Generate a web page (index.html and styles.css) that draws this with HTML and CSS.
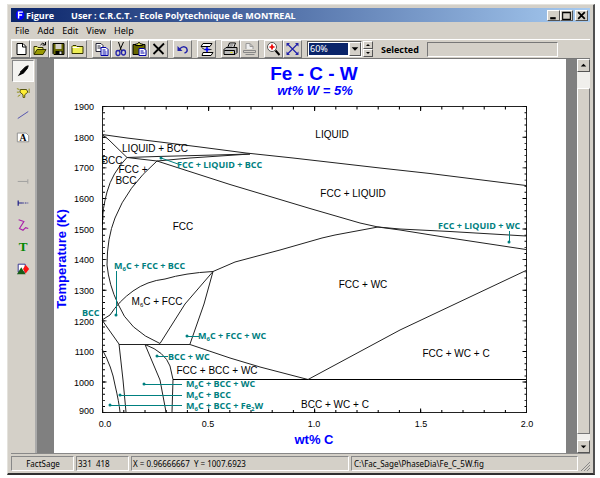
FILE: index.html
```html
<!DOCTYPE html>
<html lang="en">
<head>
<meta charset="utf-8">
<title>Figure</title>
<link rel="stylesheet" href="styles.css">
</head>
<body>
<div class="window">
  <header class="titlebar">
    <svg class="logo" viewBox="0 0 14 14"><ellipse cx="7" cy="7" rx="6" ry="7" fill="#00f"/><path d="M5 12V3h6M5 7h5" fill="none" stroke="#fff" stroke-width="2"/></svg>
    <span class="app">Figure</span>
    <span class="user">User : C.R.C.T. - Ecole Polytechnique de MONTREAL</span>
    <div class="winbtns">
      <button class="winbtn" aria-label="Minimize"><svg viewBox="0 0 10 8"><path d="M2 6.500h5" stroke="#000" stroke-width="2"/></svg></button>
      <button class="winbtn" aria-label="Maximize"><svg viewBox="0 0 10 8"><path d="M1.500 1.500h7v6h-7zM1 1h8" fill="none" stroke="#000"/></svg></button>
      <button class="winbtn close" aria-label="Close"><svg viewBox="0 0 10 8"><path d="M2 1l6 6M8 1L2 7" stroke="#000" stroke-width="1.600"/></svg></button>
    </div>
  </header>
  <nav class="menu">
    <button>File</button><button>Add</button><button>Edit</button><button>View</button><button>Help</button>
  </nav>
  <div class="toolbar">
    <div class="group">
      <button class="tool" aria-label="New"><svg viewBox="0 0 16 16"><path d="M4.500 2.500h6l3 3v8h-9z" fill="#fff" stroke="#000"/><path d="M10 2.500v3.500h3.500" fill="none" stroke="#000"/></svg></button>
      <button class="tool" aria-label="Open"><svg viewBox="0 0 16 16"><path d="M2.500 13V5.500h3l1 1h5V9" fill="#ee6" stroke="#330"/><path d="M2.500 13.500l3-5h9l-3 5z" fill="#990" stroke="#330"/><path d="M9 4q2-3 4-1l1 1m0-3v3h-3" fill="none" stroke="#000"/></svg></button>
      <button class="tool" aria-label="Save"><svg viewBox="0 0 16 16"><path d="M2.500 2.500h11v11h-10l-1-1z" fill="#660" stroke="#000"/><path d="M5 3h6v5H5z" fill="#d4d0c8"/><path d="M5 10h7v3H5z" fill="#000"/><path d="M9 10.500h2V13H9z" fill="#ddd"/></svg></button>
      <button class="tool" aria-label="Close folder"><svg viewBox="0 0 16 16"><path d="M2.500 12.500v-7l1-1h3l1 1h6v7z" fill="#ee5" stroke="#330"/><path d="M3 6.500h7" stroke="#fff"/></svg></button>
    </div>
    <div class="group">
      <button class="tool" aria-label="Copy"><svg viewBox="0 0 16 16"><path d="M2.500 2.500h5l2 2v6h-7z" fill="#fff" stroke="#223"/><path d="M4 5h3M4 7h4" stroke="#223"/><path d="M7.500 6.500h5l2 2v6h-7z" fill="#fff" stroke="#00a"/><path d="M9 9h3M9 11h4M9 13h4" stroke="#00a"/></svg></button>
      <button class="tool" aria-label="Cut"><svg viewBox="0 0 16 16"><path d="M6 1l3 9M11 1L7 10" stroke="#000" fill="none"/><ellipse cx="5.500" cy="12" rx="2" ry="2.500" fill="none" stroke="#22a" stroke-width="1.300"/><ellipse cx="11" cy="11.500" rx="2" ry="2.500" fill="none" stroke="#22a" stroke-width="1.300"/></svg></button>
      <button class="tool" aria-label="Paste"><svg viewBox="0 0 16 16"><path d="M1.500 3.500h12v10h-12z" fill="#660" stroke="#000"/><path d="M4 4.500V3h2l1-1.500h1L9 3h2v1.500z" fill="#ee5" stroke="#000"/><path d="M7.500 7.500h5l2 2v5h-7z" fill="#fff" stroke="#00a"/><path d="M9 10h3M9 12h4" stroke="#00a"/></svg></button>
      <button class="tool" aria-label="Delete"><svg viewBox="0 0 16 16"><path d="M3 3l10 10M13.500 2.500L3 13" stroke="#000" stroke-width="1.800"/></svg></button>
    </div>
    <div class="group">
      <button class="tool" aria-label="Undo"><svg viewBox="0 0 16 16"><path d="M5 8q4-4 7-1 2 4-2 5" fill="none" stroke="#22a" stroke-width="1.500"/><path d="M3 5v5h5z" fill="#22a"/></svg></button>
    </div>
    <div class="group">
      <button class="tool" aria-label="Refresh"><svg viewBox="0 0 16 16"><path d="M4.500 2.500h9l-2 3h-9zM4.500 11.500h10l-2 3h-9z" fill="#fff" stroke="#000"/><path d="M3 6.500l3 2h7" stroke="#333" fill="none"/><path d="M8.500 6v5M6 8.500h5" stroke="#00f" stroke-width="1.500"/></svg></button>
    </div>
    <div class="group">
      <button class="tool" aria-label="Print"><svg viewBox="0 0 16 16"><path d="M5 7l2-5h6l-2 5" fill="#fff" stroke="#000"/><path d="M7 4h4M6 6h4" stroke="#444"/><path d="M1.500 8.500l2-2h11v5l-2 2h-11z" fill="#bbb" stroke="#000"/><path d="M2 9.500h10v4" stroke="#000" fill="none"/><path d="M8 11.500h2" stroke="#dd0"/></svg></button>
      <button class="tool" aria-label="Print setup"><svg viewBox="0 0 16 16"><path d="M4.500 8V2.500h4l3 3V8M8.500 2.500v3h3" fill="#eee" stroke="#999"/><path d="M2 9.500h12v2H2zM4 13.500h9" fill="none" stroke="#888"/></svg></button>
    </div>
    <div class="group">
      <button class="tool" aria-label="Zoom in"><svg viewBox="0 0 16 16"><circle cx="6.500" cy="6" r="4.500" fill="#fff" stroke="#555"/><path d="M4 6h5M6.500 3.500v5" stroke="#e00" stroke-width="1.700"/><path d="M10 9.500l4 4.500" stroke="#000" stroke-width="2"/></svg></button>
      <button class="tool" aria-label="Fit"><svg viewBox="0 0 16 16"><path d="M3 3l10 10M13 3L3 13" stroke="#22a" stroke-width="1.200"/><path d="M2 2h3.500L2 5.500zM14 2v3.500L10.500 2zM2 14v-3.500L5.500 14zM14 14h-3.500l3.500-3.500z" fill="#22a"/></svg></button>
    </div>
    <div class="zoom">
      <select aria-label="Zoom"><option>60%</option></select>
      <svg class="droparrow" viewBox="0 0 12 14"><path d="M2 5h8L6 9z"/></svg>
    </div>
    <div class="spinner">
      <button aria-label="Increase"><svg viewBox="0 0 8 6"><path d="M2 4h4L4 2z"/></svg></button>
      <button aria-label="Decrease"><svg viewBox="0 0 8 6"><path d="M2 2h4L4 4z"/></svg></button>
    </div>
    <label class="sel-label" for="selected">Selected</label>
    <input id="selected" class="selected" type="text" readonly>
  </div>
  <main class="body">
    <aside class="palette">
      <button class="pal active" aria-label="Pen"><svg viewBox="0 0 16 16"><path d="M2 14l3-5 3 2z" fill="#000"/><path d="M5 9l6-6 3-1-1 3-5 6z" fill="#000" stroke="#000"/></svg></button>
      <button class="pal" aria-label="Light"><svg viewBox="0 0 16 16"><path d="M5 4h7l1.500 3L10 10v3H8v-3L4.500 7z" fill="#fe3" stroke="#440"/><path d="M1 3l3 1M1 7h3M2 12l3-2M15 3v5" stroke="#880"/></svg></button>
      <button class="pal" aria-label="Line"><svg viewBox="0 0 16 16"><path d="M2 12L14 4" stroke="#44a"/></svg></button>
      <button class="pal" aria-label="Label"><svg viewBox="0 0 16 16"><path d="M1.500 3.500h10l3 3v7h-13z" fill="#fff" stroke="#888"/><text x="4" y="12" class="icon-a">A</text></svg></button>
      <span class="pal"></span>
      <button class="pal" aria-label="Tick"><svg viewBox="0 0 16 16"><path d="M2 8.500h11M13.500 6v5" stroke="#999"/></svg></button>
      <button class="pal" aria-label="Axis"><svg viewBox="0 0 16 16"><path d="M2.500 5v6M3 8h4" stroke="#228" stroke-width="1.400"/><path d="M7 8h7" stroke="#228" stroke-dasharray="2 1"/></svg></button>
      <button class="pal" aria-label="Curve"><svg viewBox="0 0 16 16"><path d="M3 2l6 2-5 8 4 2 3-3 3 1" fill="none" stroke="#a2a" stroke-width="1.300"/></svg></button>
      <button class="pal" aria-label="Text"><svg viewBox="0 0 16 16"><text x="3" y="13" class="icon-t">T</text></svg></button>
      <button class="pal" aria-label="Shapes"><svg viewBox="0 0 16 16"><path d="M2.500 2.500h8v9h-8z" fill="#fff" stroke="#228"/><path d="M11 3l4 5-4 5-3-5z" fill="#f11"/><path d="M1 14l5-8 5 8z" fill="#175c17"/></svg></button>
    </aside>
    <div class="canvas">
      <svg class="chart" viewBox="54 59 512 394" role="img" aria-label="Fe - C - W phase diagram">
        <g class="heading">
          <text class="h1" x="314" y="80">Fe - C - W</text>
          <text class="h2" x="315" y="95">wt% W = 5%</text>
        </g>
        <rect class="line" x="102.500" y="106.500" width="424" height="306"/>
        <g class="ticks">
          <path class="minor" pathLength="2000" d="M102.500 108H526.500"/>
          <path class="minor" pathLength="2000" d="M102.500 411.500H526.500"/>
          <path class="major-x" pathLength="2000" d="M102.500 109H526.500"/>
          <path class="major-x" pathLength="2000" d="M102.500 410.500H526.500"/>
          <path class="minor-y" pathLength="1000" d="M104 106.500V412.500"/>
          <path class="minor-y" pathLength="1000" d="M525.500 106.500V412.500"/>
          <path class="major-y" pathLength="1000" d="M104.500 106.500V412.500"/>
          <path class="major-y" pathLength="1000" d="M524.500 106.500V412.500"/>
        </g>
        <g class="line">
          <path d="M102 134.500L127 138 160 142 200 147 246 153 293 158 380 168 430 173.500 526 185.500"/>
          <path d="M102 134.500L108 139 127 157.500 157 156.500 215 155 250 154"/>
          <path d="M127 157.500L157 161 190 158 250 154"/>
          <path d="M127 157.500Q112 173 107 192T103 220"/>
          <path d="M157 161Q127 187 115 218 107 238 107 265 109 285 118 304 128 330 160 343.500"/>
          <path d="M157 161L230 184.500 310 208.500 360 223 378 227 400 229 450 231.500 526 236"/>
          <path d="M378 227L400 230 450 238 526 249.500"/>
          <path d="M102 320L110 315Q119 301 133 291T165 279Q185 273 213 271.500L235 262 280 250 322 238 335 235 378 227"/>
          <path d="M213 271.500L185 304 160 343.500M213 271.500L204 304 190 344"/>
          <path d="M119 344.500H190L230 358 260 367 308 379.500"/>
          <path d="M102 320L119 344 123 380 126 412"/>
          <path d="M102 349Q112 367 115 385 119 402 120 412"/>
          <path d="M145 344.500L160 380 166 412"/>
          <path d="M145 344.500Q165 352 170 366L173 379.500 172 412"/>
          <path class="strong" d="M173 379.500H526"/>
          <path d="M308 379.500L400 330 526 270.500"/>
        </g>
        <path class="strong" d="M102.500 210V225M102.500 308V334"/>
        <g class="axis">
          <text x="94" y="110">1900</text><text x="94" y="141">1800</text><text x="94" y="171">1700</text>
          <text x="94" y="202">1600</text><text x="94" y="233">1500</text><text x="94" y="263">1400</text>
          <text x="94" y="294">1300</text><text x="94" y="325">1200</text><text x="94" y="355">1100</text>
          <text x="94" y="386">1000</text><text x="94" y="414">900</text>
        </g>
        <g class="axis mid">
          <text x="105" y="427">0.0</text><text x="208" y="427">0.5</text><text x="314" y="427">1.0</text>
          <text x="421" y="427">1.5</text><text x="527" y="427">2.0</text>
        </g>
        <text class="axis-title" x="314" y="444">wt% C</text>
        <text class="axis-title" transform="rotate(-90 66 259)" x="66" y="259">Temperature (K)</text>
        <g class="phase">
          <text x="332" y="138">LIQUID</text>
          <text x="155" y="152">LIQUID + BCC</text>
          <text x="112" y="164">BCC</text>
          <text x="133" y="173">FCC +</text>
          <text x="126" y="184">BCC</text>
          <text x="353" y="197">FCC + LIQUID</text>
          <text x="183" y="230">FCC</text>
          <text x="363" y="288">FCC + WC</text>
          <text x="157" y="305">M<tspan class="sub" dy="2">6</tspan><tspan dy="-2">C + FCC</tspan></text>
          <text x="456" y="357">FCC + WC + C</text>
          <text x="217" y="374">FCC + BCC + WC</text>
          <text x="335" y="408">BCC + WC + C</text>
        </g>
        <g class="leader">
          <path d="M161 158L178 164M116.500 271V314M187 336.500H199M156 356.500H168M144 384.500H182M120 395.500H182M110 405.500H182M509.500 231V242"/>
          <g class="dot">
            <circle cx="161" cy="158" r="1.500"/><circle cx="116" cy="315" r="1.500"/><circle cx="187" cy="336" r="1.500"/><circle cx="157" cy="356" r="1.500"/><circle cx="144" cy="384" r="1.500"/><circle cx="120" cy="395" r="1.500"/><circle cx="110" cy="405" r="1.500"/><circle cx="509" cy="242" r="1.500"/>
          </g>
        </g>
        <g class="note">
          <text x="177" y="168">FCC + LIQUID + BCC</text>
          <text x="438" y="229">FCC + LIQUID + WC</text>
          <text x="114" y="269">M<tspan class="sub" dy="2">6</tspan><tspan dy="-2">C + FCC + BCC</tspan></text>
          <text x="82" y="316">BCC</text>
          <text x="198" y="339">M<tspan class="sub" dy="2">6</tspan><tspan dy="-2">C + FCC + WC</tspan></text>
          <text x="168" y="360">BCC + WC</text>
          <text x="186" y="387">M<tspan class="sub" dy="2">6</tspan><tspan dy="-2">C + BCC + WC</tspan></text>
          <text x="186" y="398">M<tspan class="sub" dy="2">6</tspan><tspan dy="-2">C + BCC</tspan></text>
          <text x="186" y="409">M<tspan class="sub" dy="2">6</tspan><tspan dy="-2">C + BCC + Fe</tspan><tspan class="sub" dy="2">2</tspan><tspan dy="-2">W</tspan></text>
        </g>
      </svg>
    </div>
    <div class="scroll">
      <button aria-label="Scroll up"><svg viewBox="0 0 12 12"><path d="M3 7h6L6 4z"/></svg></button>
      <div class="track"><div class="thumb"></div></div>
      <button aria-label="Scroll down"><svg viewBox="0 0 12 12"><path d="M3 5h6L6 8z"/></svg></button>
    </div>
  </main>
  <footer class="status">
    <span class="cell name">FactSage</span>
    <span class="cell pos">331&nbsp; 418</span>
    <span class="cell coords">X = 0.96666667&nbsp; Y = 1007.6923</span>
    <span class="cell path">C:\Fac_Sage\PhaseDia\Fe_C_5W.fig</span>
    <svg class="grip" viewBox="0 0 10 10"><path d="M1 10l9-9M4 10l6-6M7 10l3-3" stroke="#888"/></svg>
  </footer>
</div>
</body>
</html>
```
FILE: styles.css
```css
* { box-sizing: border-box; }
body {
  margin: 0;
  padding: 4px 5px 4px 7px;
  background: #fff;
  font-family: "Noto Sans", sans-serif;
  font-size: 9px;
  color: #000;
}
button { font: inherit; color: inherit; padding: 0; border: 0; background: none; }
svg { display: block; }
.window {
  display: flex;
  flex-direction: column;
  background: #d4d0c8;
  border: 1px solid #e4e2dc;
  border-right: 2px solid #505050;
  border-bottom: 2px solid #303030;
  padding: 3px 3px 2px;
}
.titlebar {
  display: flex;
  align-items: center;
  height: 14px;
  padding: 0 2px 0 4px;
  background: linear-gradient(90deg, #0a246a, #a6caf0);
  color: #fff;
  font-family: "Open Sans", sans-serif;
  font-weight: 700;
  white-space: nowrap;
}
.logo { width: 10px; height: 12px; margin-right: 1px; }
.user { margin-left: 17px; }
.winbtns { display: flex; margin-left: auto; }
.winbtn, .scroll button, .spinner button {
  background: #d4d0c8;
  border: 1px solid;
  border-color: #fff #555 #555 #fff;
}
.winbtn { width: 13px; height: 11px; }
.winbtn.close { margin-left: 2px; }
.winbtn svg { width: 100%; height: 100%; }
.menu { display: flex; gap: 8px; height: 17px; padding: 0 4px; align-items: center; }
.toolbar {
  display: flex;
  align-items: center;
  height: 20px;
  border-top: 1px solid #fff;
  border-bottom: 1px solid #777;
}
.group { display: flex; margin-right: 5px; }
.tool {
  width: 19px;
  height: 18px;
  border: 1px solid;
  border-color: #fff #777 #777 #fff;
}
.tool svg { width: 100%; height: 100%; }
.zoom {
  display: grid;
  width: 55px;
  height: 16px;
  border: 1px solid;
  border-color: #555 #fff #fff #555;
  background: #fff;
}
.zoom > * { grid-area: 1 / 1; }
.zoom select {
  appearance: none;
  margin: 1px 13px 1px 1px;
  border: 0;
  border-radius: 0;
  padding: 0 1px;
  background: #0a246a;
  color: #fff;
  font: inherit;
  line-height: 12px;
}
.droparrow {
  justify-self: end;
  width: 12px;
  height: 14px;
  background: #d4d0c8;
  border: 1px solid;
  border-color: #fff #555 #555 #fff;
  pointer-events: none;
}
.spinner { display: flex; flex-direction: column; width: 10px; margin: 0 8px 0 1px; }
.spinner button { height: 8px; }
.spinner svg { width: 8px; height: 6px; }
.sel-label { font-family: "Open Sans", sans-serif; font-weight: 700; margin-right: 8px; }
.selected {
  flex: 1;
  min-width: 0;
  height: 15px;
  margin-right: 32px;
  background: #d4d0c8;
  border: 1px solid;
  border-color: #777 #fff #fff #777;
}
.body { display: flex; border-bottom: 1px solid #888; }
.palette {
  display: flex;
  flex-direction: column;
  width: 26px;
  padding: 1px;
  border-right: 2px solid #aaa;
}
.pal { display: grid; place-items: center; height: 22px; border: 1px solid transparent; }
.pal svg { width: 14px; height: 14px; }
.pal.active { background: #f4f3f0; border-color: #888 #fff #fff #888; }
.icon-a { font: 700 11px "Liberation Serif", serif; }
.icon-t { font: 700 15px "Liberation Serif", serif; fill: #080; }
.canvas { flex: 1; min-width: 0; background: #808080; padding: 0 11px 0 17px; }
.chart { width: 100%; height: auto; background: #fff; font-family: "Liberation Sans", sans-serif; }
.scroll { display: flex; flex-direction: column; width: 13px; }
.scroll button { height: 13px; }
.scroll svg { width: 11px; height: 11px; }
.track { display: flex; flex-direction: column; flex: 1; padding: 16px 0 6px; background: #f0efec; }
.thumb { flex: 1; background: #d4d0c8; border: 1px solid; border-color: #fff #777 #777 #fff; }
.status {
  display: flex;
  gap: 2px;
  height: 17px;
  padding-top: 2px;
  font-size: 8px;
  line-height: 13px;
  white-space: nowrap;
}
.cell { padding-left: 1px; border: 1px solid; border-color: #888 #fff #fff #888; }
.name { width: 63px; text-align: center; }
.pos { width: 53px; }
.coords { width: 218px; }
.path { flex: 1; padding-left: 2px; }
.grip { width: 10px; height: 10px; align-self: flex-end; }

.line, .line path { fill: none; stroke: #222; stroke-width: 1; }
.line .strong, .strong { stroke: #000; stroke-width: 1; }
.ticks path { fill: none; stroke: #000; }
.ticks .minor { stroke-width: 3; stroke-dasharray: 5 95; stroke-dashoffset: 2; }
.ticks .major-x { stroke-width: 4; stroke-dasharray: 5 495; stroke-dashoffset: 2; }
.ticks .minor-y { stroke-width: 2; stroke-dasharray: 3 17; stroke-dashoffset: 1; }
.ticks .major-y { stroke-width: 4; stroke-dasharray: 3 97; stroke-dashoffset: 1; }
.heading { text-anchor: middle; fill: #00f; font-weight: 700; }
.h1 { font-size: 19px; }
.h2 { font-size: 13px; font-style: italic; }
.axis { font-size: 9px; text-anchor: end; }
.axis.mid { text-anchor: middle; }
.axis-title { font-size: 13px; font-weight: 700; fill: #00f; text-anchor: middle; }
.phase { font-size: 10px; text-anchor: middle; }
.leader path { stroke: #008080; fill: none; }
.dot { fill: #008080; }
.note { font-family: "Open Sans", sans-serif; font-size: 9px; font-weight: 700; fill: #008080; }
.sub { font-size: 6px; }
```
